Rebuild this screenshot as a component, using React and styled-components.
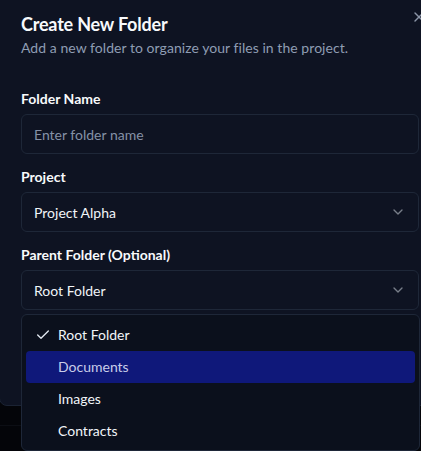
import React, { useState } from 'react';
import styled, { createGlobalStyle } from 'styled-components';

const GlobalStyle = createGlobalStyle`
  html, body {
    margin: 0;
    padding: 0;
    background: #040509;
    font-family: Lato, "Noto Sans", "Liberation Sans", sans-serif;
    -webkit-font-smoothing: antialiased;
  }
  * { box-sizing: border-box; }
`;

const Page = styled.div`
  position: relative;
  width: 421px;
  height: 451px;
  overflow: hidden;
  background: #040509;
`;

const BackdropLine = styled.div`
  position: absolute;
  left: 0;
  right: 0;
  top: 425px;
  height: 1px;
  background: #0c0e14;
`;

const Dialog = styled.div`
  position: absolute;
  left: -1px;
  top: -10px;
  width: 443px;
  height: 416px;
  padding: 19px 24px 24px 21px;
  background: #0e1322;
  border: 1px solid #1b2333;
  border-radius: 8px;
  display: flex;
  flex-direction: column;
`;

const CloseButton = styled.button`
  position: absolute;
  top: 18px;
  right: 14px;
  width: 16px;
  height: 16px;
  padding: 0;
  border: none;
  background: none;
  color: #8b95a7;
  display: flex;
`;

const Header = styled.div`
  display: flex;
  flex-direction: column;
`;

const Title = styled.h2`
  margin: 0;
  font-size: 18px;
  line-height: 28px;
  font-weight: 700;
  color: #f8fafc;
  letter-spacing: -0.2px;
`;

const Description = styled.p`
  margin: 0;
  font-size: 14px;
  line-height: 20px;
  color: #8f9db3;
  letter-spacing: 0.05px;
`;

const Form = styled.div`
  margin-top: 34px;
  display: flex;
  flex-direction: column;
  gap: 16px;
`;

const Field = styled.div`
  display: flex;
  flex-direction: column;
  gap: 8px;
`;

const Label = styled.label`
  font-size: 14px;
  line-height: 14px;
  font-weight: 700;
  color: #f8fafc;
`;

const Box = styled.div`
  height: 40px;
  width: 398px;
  border: 1px solid #1e2738;
  border-radius: 6px;
  padding: 0 12px;
  display: flex;
  align-items: center;
  justify-content: space-between;
  font-size: 14px;
  color: ${p => (p.$placeholder ? '#8591a6' : '#f1f5f9')};
  background: #0e1322;
`;

const Chevron = styled.svg`
  width: 16px;
  height: 16px;
  opacity: 0.5;
  color: #e2e8f0;
`;

const Menu = styled.div`
  position: absolute;
  left: 21px;
  top: 314px;
  width: 399px;
  height: 137px;
  padding: 4px;
  background: #0b101c;
  border: 1px solid #1e2738;
  border-radius: 6px;
  display: flex;
  flex-direction: column;
`;

const Item = styled.div`
  position: relative;
  height: 32px;
  padding-left: 32px;
  display: flex;
  align-items: center;
  border-radius: 4px;
  font-size: 14px;
  color: ${p => (p.$active ? '#c9cde9' : '#f1f5f9')};
  background: ${p => (p.$active ? '#0f187a' : 'transparent')};
`;

const CheckMark = styled.svg`
  position: absolute;
  left: 9px;
  top: 8px;
  width: 16px;
  height: 16px;
  color: #e2e8f0;
`;

const ChevronDown = () => (
  <Chevron viewBox="0 0 24 24" fill="none" stroke="currentColor" strokeWidth="2" strokeLinecap="round" strokeLinejoin="round">
    <path d="m6 9 6 6 6-6" />
  </Chevron>
);

const folders = ['Root Folder', 'Documents', 'Images', 'Contracts'];

export default function App() {
  const [selected] = useState('Root Folder');
  const [hovered] = useState('Documents');

  return (
    <Page>
      <GlobalStyle />
      <BackdropLine />
      <Dialog>
        <CloseButton aria-label="Close">
          <svg width="16" height="16" viewBox="0 0 24 24" fill="none" stroke="currentColor" strokeWidth="2" strokeLinecap="round" strokeLinejoin="round">
            <path d="M18 6 6 18" />
            <path d="m6 6 12 12" />
          </svg>
        </CloseButton>
        <Header>
          <Title>Create New Folder</Title>
          <Description>Add a new folder to organize your files in the project.</Description>
        </Header>
        <Form>
          <Field>
            <Label>Folder Name</Label>
            <Box $placeholder>Enter folder name</Box>
          </Field>
          <Field>
            <Label>Project</Label>
            <Box>
              Project Alpha
              <ChevronDown />
            </Box>
          </Field>
          <Field>
            <Label>Parent Folder (Optional)</Label>
            <Box>
              Root Folder
              <ChevronDown />
            </Box>
          </Field>
        </Form>
      </Dialog>
      <Menu>
        {folders.map(name => (
          <Item key={name} $active={name === hovered}>
            {name === selected && (
              <CheckMark viewBox="0 0 24 24" fill="none" stroke="currentColor" strokeWidth="2" strokeLinecap="round" strokeLinejoin="round">
                <path d="M20 6 9 17l-5-5" />
              </CheckMark>
            )}
            {name}
          </Item>
        ))}
      </Menu>
    </Page>
  );
}
